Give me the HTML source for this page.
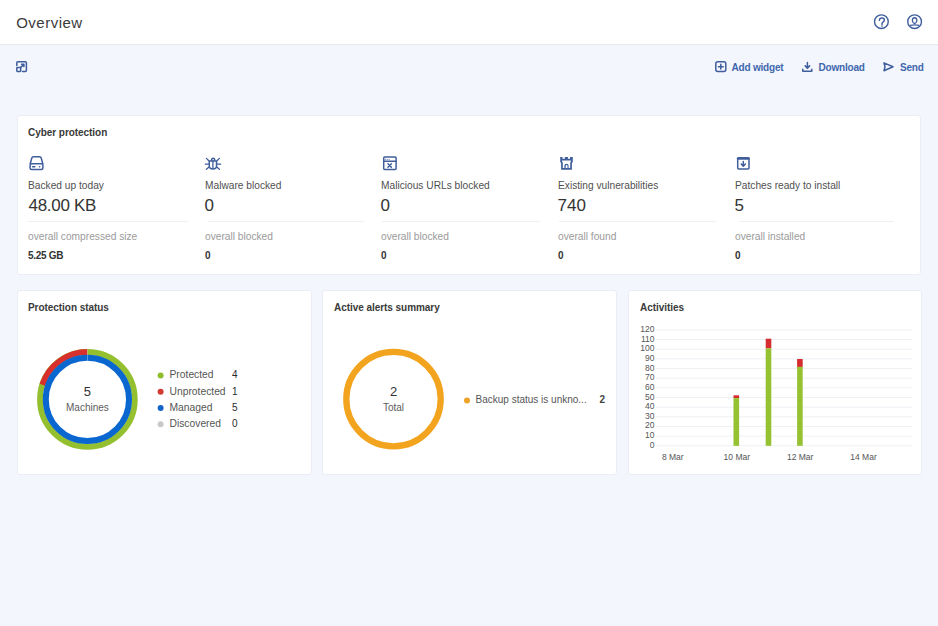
<!DOCTYPE html>
<html><head><meta charset="utf-8">
<style>
html,body{margin:0;padding:0;}
body{width:938px;height:626px;overflow:hidden;background:#f3f6fd;font-family:"Liberation Sans",sans-serif;position:relative;}
.a{position:absolute;white-space:nowrap;line-height:1;}
#hdr{position:absolute;left:0;top:0;width:938px;height:44px;background:#fff;border-bottom:1px solid #e6e9f1;}
.card{position:absolute;background:#fff;border:1px solid #eaedf3;border-radius:3px;box-sizing:border-box;}
.lnk{color:#3f67ad;font-weight:700;font-size:10px;letter-spacing:-0.2px;}
.ttl{color:#393939;font-weight:700;font-size:10px;letter-spacing:-0.05px;}
.lbl{color:#505050;font-size:10.2px;}
.val{color:#333;font-size:17px;}
.sub{color:#9a9a9a;font-size:10.2px;}
.sv{color:#333;font-weight:700;font-size:10px;letter-spacing:-0.3px;}
.leg{color:#555;font-size:10.3px;}
.num{color:#2a2a2a;font-size:10px;}
.ax{color:#555;font-size:8.7px;}
svg{position:absolute;left:0;top:0;}
</style></head><body>
<div id="hdr"></div>
<div class="a " style="left:16.2px;top:15px;font-size:15px;color:#3b3b3b;letter-spacing:0.5px;">Overview</div>
<div class="card" style="left:17px;top:115px;width:904px;height:160px;"></div>
<div class="card" style="left:17px;top:290px;width:295px;height:185px;"></div>
<div class="card" style="left:322px;top:290px;width:295px;height:185px;"></div>
<div class="card" style="left:628px;top:290px;width:294px;height:185px;"></div>
<div class="a lnk" style="left:731.5px;top:63px;font-size:10px;">Add widget</div>
<div class="a lnk" style="left:818.5px;top:63px;font-size:10px;">Download</div>
<div class="a lnk" style="left:900px;top:63px;font-size:10px;">Send</div>
<div class="a ttl" style="left:28px;top:128px;font-size:10px;">Cyber protection</div>
<div class="a lbl" style="left:28px;top:181px;font-size:10.2px;">Backed up today</div>
<div class="a val" style="left:28.5px;top:197px;font-size:17px;letter-spacing:-0.3px;">48.00 KB</div>
<div class="a sub" style="left:28px;top:232px;font-size:10.2px;">overall compressed size</div>
<div class="a sv" style="left:28px;top:251px;font-size:10px;">5.25 GB</div>
<div class="a lbl" style="left:205px;top:181px;font-size:10.2px;">Malware blocked</div>
<div class="a val" style="left:204.5px;top:197px;font-size:17px;">0</div>
<div class="a sub" style="left:205px;top:232px;font-size:10.2px;">overall blocked</div>
<div class="a sv" style="left:205px;top:251px;font-size:10px;">0</div>
<div class="a lbl" style="left:381px;top:181px;font-size:10.2px;">Malicious URLs blocked</div>
<div class="a val" style="left:380.5px;top:197px;font-size:17px;">0</div>
<div class="a sub" style="left:381px;top:232px;font-size:10.2px;">overall blocked</div>
<div class="a sv" style="left:381px;top:251px;font-size:10px;">0</div>
<div class="a lbl" style="left:558px;top:181px;font-size:10.2px;">Existing vulnerabilities</div>
<div class="a val" style="left:557.5px;top:197px;font-size:17px;">740</div>
<div class="a sub" style="left:558px;top:232px;font-size:10.2px;">overall found</div>
<div class="a sv" style="left:558px;top:251px;font-size:10px;">0</div>
<div class="a lbl" style="left:735px;top:181px;font-size:10.2px;">Patches ready to install</div>
<div class="a val" style="left:734.5px;top:197px;font-size:17px;">5</div>
<div class="a sub" style="left:735px;top:232px;font-size:10.2px;">overall installed</div>
<div class="a sv" style="left:735px;top:251px;font-size:10px;">0</div>
<div class="a ttl" style="left:28px;top:303px;font-size:10px;">Protection status</div>
<div class="a ttl" style="left:334px;top:303px;font-size:10px;">Active alerts summary</div>
<div class="a ttl" style="left:640px;top:303px;font-size:10px;">Activities</div>
<div class="a " style="left:47.4px;top:385px;font-size:13px;width:80px;text-align:center;color:#333;">5</div>
<div class="a " style="left:47.4px;top:403px;font-size:10px;width:80px;text-align:center;color:#5c5c5c;">Machines</div>
<div class="a leg" style="left:169.5px;top:370px;font-size:10.3px;">Protected</div>
<div class="a num" style="left:232px;top:370px;font-size:10px;">4</div>
<div class="a leg" style="left:169.5px;top:387px;font-size:10.3px;">Unprotected</div>
<div class="a num" style="left:232px;top:387px;font-size:10px;">1</div>
<div class="a leg" style="left:169.5px;top:403px;font-size:10.3px;">Managed</div>
<div class="a num" style="left:232px;top:403px;font-size:10px;">5</div>
<div class="a leg" style="left:169.5px;top:419px;font-size:10.3px;">Discovered</div>
<div class="a num" style="left:232px;top:419px;font-size:10px;">0</div>
<div class="a " style="left:353.5px;top:385px;font-size:13px;width:80px;text-align:center;color:#333;">2</div>
<div class="a " style="left:353.5px;top:403px;font-size:10px;width:80px;text-align:center;color:#5c5c5c;">Total</div>
<div class="a leg" style="left:475.5px;top:395px;font-size:10px;font-size:10px;">Backup status is unkno...</div>
<div class="a num" style="left:599.5px;top:395px;font-size:10px;font-weight:700;color:#444;">2</div>
<div class="a ax" style="left:600px;top:441px;font-size:8.5px;width:54.5px;text-align:right;">0</div>
<div class="a ax" style="left:600px;top:431px;font-size:8.5px;width:54.5px;text-align:right;">10</div>
<div class="a ax" style="left:600px;top:421px;font-size:8.5px;width:54.5px;text-align:right;">20</div>
<div class="a ax" style="left:600px;top:412px;font-size:8.5px;width:54.5px;text-align:right;">30</div>
<div class="a ax" style="left:600px;top:402px;font-size:8.5px;width:54.5px;text-align:right;">40</div>
<div class="a ax" style="left:600px;top:393px;font-size:8.5px;width:54.5px;text-align:right;">50</div>
<div class="a ax" style="left:600px;top:383px;font-size:8.5px;width:54.5px;text-align:right;">60</div>
<div class="a ax" style="left:600px;top:373px;font-size:8.5px;width:54.5px;text-align:right;">70</div>
<div class="a ax" style="left:600px;top:364px;font-size:8.5px;width:54.5px;text-align:right;">80</div>
<div class="a ax" style="left:600px;top:354px;font-size:8.5px;width:54.5px;text-align:right;">90</div>
<div class="a ax" style="left:600px;top:344px;font-size:8.5px;width:54.5px;text-align:right;">100</div>
<div class="a ax" style="left:600px;top:335px;font-size:8.5px;width:54.5px;text-align:right;">110</div>
<div class="a ax" style="left:600px;top:325px;font-size:8.5px;width:54.5px;text-align:right;">120</div>
<div class="a ax" style="left:642.8px;top:453px;font-size:8.5px;width:60px;text-align:center;">8 Mar</div>
<div class="a ax" style="left:706.8px;top:453px;font-size:8.5px;width:60px;text-align:center;">10 Mar</div>
<div class="a ax" style="left:770.2px;top:453px;font-size:8.5px;width:60px;text-align:center;">12 Mar</div>
<div class="a ax" style="left:833.5px;top:453px;font-size:8.5px;width:60px;text-align:center;">14 Mar</div>
<svg width="938" height="626" viewBox="0 0 938 626">
<g fill="none" stroke="#405e9c" stroke-width="1.3">
<circle cx="881.4" cy="21.7" r="6.85" stroke-width="1.4"/>
<path d="M879.4 20.2 C879.4 18.7 880.5 18 881.9 18 C883.4 18 884.4 18.9 884.4 20.1 C884.4 21.7 882.1 21.9 882 23.6 V24.4" stroke-width="1.45" stroke-linecap="round"/>
<circle cx="914.6" cy="21.7" r="6.85" stroke-width="1.4"/>
<path d="M914.6 17.75 C916.1 17.75 916.8 18.8 916.8 20.2 C916.8 22 915.6 23.4 914.6 23.4 C913.6 23.4 912.4 22 912.4 20.2 C912.4 18.8 913.1 17.75 914.6 17.75 Z" stroke-width="1.3"/>
<path d="M910 25.4 Q914.6 24.2 919.2 25.4" stroke-width="1.3"/>
</g>
<circle cx="881.95" cy="26.1" r="0.8" fill="#405e9c"/>
<g fill="none" stroke="#405e9c" stroke-width="1.5" stroke-linecap="round" stroke-linejoin="round">
<path d="M16.8 65.5 V62.8 Q16.8 61.8 17.8 61.8 H25.4 Q26.4 61.8 26.4 62.8 V70.4 Q26.4 71.4 25.4 71.4 H22.5"/>
<rect x="16.8" y="67.5" width="3.9" height="3.9" rx="0.6"/>
<path d="M20.5 67.6 L23.9 64.2 M21.6 64.2 H23.9 V66.5"/>
<rect x="715.8" y="61.7" width="10" height="9.8" rx="2"/>
<path d="M720.8 64.3 V69.1 M718.4 66.7 H723.2"/>
<path d="M807.4 62.4 V68 M805.2 65.9 L807.4 68.1 L809.6 65.9"/>
<path d="M802.8 69.2 V71.2 H811.8 V69.2"/>
<path d="M883.9 62.9 L893 66.8 L884 70.7 L885 66.8 Z"/>
</g>
<g fill="none" stroke="#405e9c" stroke-width="1.5" stroke-linecap="round" stroke-linejoin="round">
<path d="M30.2 163.8 L31.8 158 Q32.2 156.8 33.4 156.8 H39.6 Q40.8 156.8 41.2 158 L42.8 163.8"/>
<rect x="30.1" y="163.8" width="12.8" height="5.8" rx="1.5"/>
<path d="M32.6 166.7 H34.8"/>
<path d="M39.5 166.7 H39.7"/>
<path d="M211.6 160.3 A1.55 2 0 0 1 214.7 160.3"/>
<path d="M209.25 160.9 H216.55 V165.8 Q216.55 169.05 212.9 169.05 Q209.25 169.05 209.25 165.8 Z"/>
<path stroke-width="1.3" d="M212.9 161 V168.6 M205.3 164.1 H208.6 M217.2 164.1 H220.7 M206.4 158.4 L208.6 160.5 M219.4 158.4 L217.2 160.5 M206.4 169.2 L208.7 167.2 M219.4 169.2 L217.1 167.2"/>
<rect x="383.7" y="156.9" width="12.4" height="12.5" rx="1"/>
<path d="M383.8 161.3 H396"/>
<g fill="#405e9c" stroke="none"><circle cx="385.3" cy="159.3" r="0.55"/><circle cx="387.2" cy="159.3" r="0.55"/><circle cx="389.1" cy="159.3" r="0.55"/></g>
<path d="M388 163.8 L391.4 167.2 M391.4 163.8 L388 167.2"/>
</g>
<path fill="#405e9c" fill-rule="evenodd" d="M560.2 157 H562.5 V158.7 H564.8 V157 H567.9 V158.7 H570.1 V157 H572.8 V162 L571.9 163 V169.8 H561.1 V163 L560.2 162 Z M562.1 160.4 H570.9 V161.5 L570.2 162.4 V168.1 H568.6 V165.8 A2.1 2.1 0 0 0 564.4 165.8 V168.1 H562.8 V162.4 L562.1 161.5 Z M565.7 168.1 V165.9 A0.9 0.9 0 0 1 567.5 165.9 V168.1 Z"/>
<g fill="none" stroke="#405e9c" stroke-width="1.5" stroke-linecap="round" stroke-linejoin="round">
<rect x="737.7" y="157.8" width="11.3" height="11.3" rx="1"/>
<path d="M737.8 158.6 H748.9" stroke-width="2.2"/>
<path d="M743.3 161.6 V166 M741.2 164 L743.3 166.1 L745.4 164"/>
</g>
<rect x="27.5" y="221" width="160.5" height="1" fill="#eef0f3"/>
<rect x="208" y="221" width="156" height="1" fill="#eef0f3"/>
<rect x="382" y="221" width="158" height="1" fill="#eef0f3"/>
<rect x="559" y="221" width="157" height="1" fill="#eef0f3"/>
<rect x="739" y="221" width="155" height="1" fill="#eef0f3"/>
<circle cx="87.4" cy="399.4" r="47.4" fill="none" stroke="#94bf2e" stroke-width="5.8"/>
<path d="M42.32 384.75 A47.4 47.4 0 0 1 87.4 352" fill="none" stroke="#d8302d" stroke-width="5.8"/>
<circle cx="87.4" cy="399.4" r="41.6" fill="none" stroke="#0b67d0" stroke-width="6"/>
<path d="M87.4 348.79999999999995 V360.9" stroke="#fff" stroke-width="0.6" opacity="0.6"/>
<circle cx="160.6" cy="375.4" r="3" fill="#8fbc2b"/>
<circle cx="160.6" cy="391.7" r="3" fill="#d23a32"/>
<circle cx="160.6" cy="408" r="3" fill="#1565c8"/>
<circle cx="160.6" cy="424.3" r="3" fill="#c8c8c8"/>
<circle cx="393.5" cy="399.1" r="47.2" fill="none" stroke="#f3a41f" stroke-width="6.3"/>
<circle cx="467" cy="400.4" r="3" fill="#eea228"/>
<rect x="656" y="445.3" width="256" height="1" fill="#eef0f4"/>
<rect x="656" y="435.64" width="256" height="1" fill="#eef0f4"/>
<rect x="656" y="425.98" width="256" height="1" fill="#eef0f4"/>
<rect x="656" y="416.32" width="256" height="1" fill="#eef0f4"/>
<rect x="656" y="406.66" width="256" height="1" fill="#eef0f4"/>
<rect x="656" y="397" width="256" height="1" fill="#eef0f4"/>
<rect x="656" y="387.34" width="256" height="1" fill="#eef0f4"/>
<rect x="656" y="377.68" width="256" height="1" fill="#eef0f4"/>
<rect x="656" y="368.02" width="256" height="1" fill="#eef0f4"/>
<rect x="656" y="358.36" width="256" height="1" fill="#eef0f4"/>
<rect x="656" y="348.7" width="256" height="1" fill="#eef0f4"/>
<rect x="656" y="339.04" width="256" height="1" fill="#eef0f4"/>
<rect x="656" y="329.38" width="256" height="1" fill="#eef0f4"/>
<rect x="733.5" y="395.3" width="5.6" height="2.8" fill="#d42c30"/>
<rect x="733.5" y="398.1" width="5.6" height="47.7" fill="#96c130"/>
<rect x="765.7" y="338.7" width="5.6" height="9.7" fill="#d42c30"/>
<rect x="765.7" y="348.4" width="5.6" height="97.4" fill="#96c130"/>
<rect x="797.1" y="359" width="5.6" height="7.9" fill="#d42c30"/>
<rect x="797.1" y="366.9" width="5.6" height="78.9" fill="#96c130"/>
</svg>
</body></html>
